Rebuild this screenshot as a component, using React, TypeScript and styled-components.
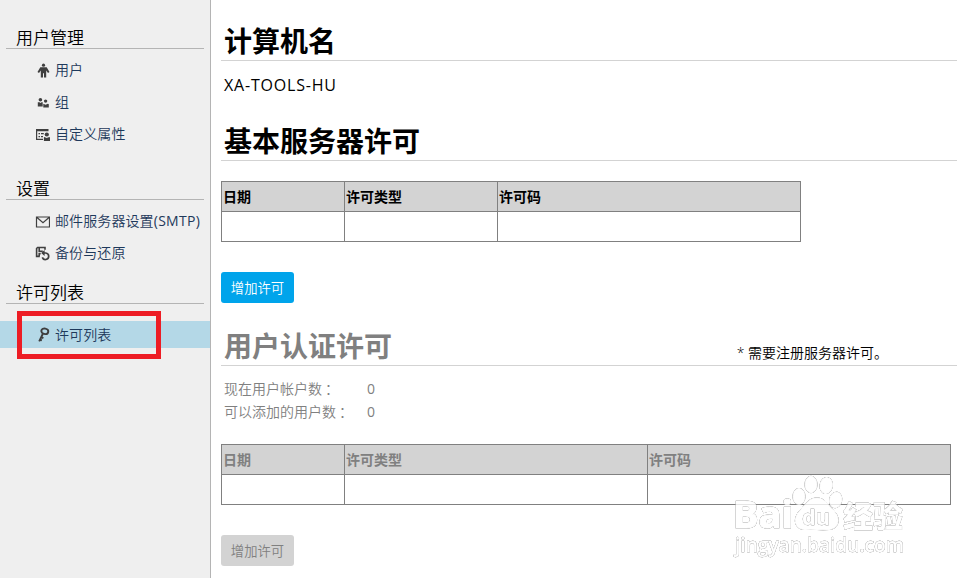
import React from "react";
import styled, { createGlobalStyle } from "styled-components";

const GlobalStyle = createGlobalStyle`
  * { box-sizing: border-box; }
  body {
    margin: 0;
    background: #fff;
    color: #000;
    font-family: "Open Sans", "Noto Sans CJK SC", sans-serif;
    font-size: 14px;
    overflow: hidden;
  }
`;

const Page = styled.div`
  position: relative;
  display: flex;
  width: 957px;
  height: 578px;
  overflow: hidden;
`;

const Sidebar = styled.nav`
  width: 211px;
  flex: none;
  background: #efefef;
  border-right: 1px solid #b4b4b4;
`;

const GroupTitle = styled.h2<{ $height: number }>`
  display: flex;
  align-items: flex-end;
  height: ${(p) => p.$height}px;
  margin: 0 6px;
  padding-left: 10px;
  border-bottom: 1px solid #b4b4b4;
  font-size: 17px;
  font-weight: 350;
  line-height: 20px;
`;

const Menu = styled.ul<{ $offset?: number }>`
  list-style: none;
  margin: ${(p) => p.$offset ?? 5}px 0 0;
  padding: 0;
`;

const MenuItem = styled.li<{ $active?: boolean }>`
  display: flex;
  align-items: center;
  gap: 5px;
  height: ${(p) => (p.$active ? 27 : 32)}px;
  padding-left: 35px;
  background: ${(p) => (p.$active ? "#b4d8e7" : "transparent")};
  color: #1e395b;
  line-height: 20px;
  white-space: nowrap;
`;

const Icon = styled.svg`
  flex: none;
  width: 15px;
  height: 15px;
  color: #3f3f3f;
`;

const MenuText = styled.span`
  font-weight: 350;
  letter-spacing: 0.1px;
`;

const Latin = styled.span`
  font-weight: 400;
  letter-spacing: 0.3px;
`;

const Main = styled.main`
  flex: 1;
  padding-left: 10px;
`;

const Title = styled.h1<{ $height: number; $muted?: boolean }>`
  display: flex;
  align-items: flex-end;
  justify-content: space-between;
  height: ${(p) => p.$height}px;
  margin: 0;
  padding: 0 69px 0 3px;
  border-bottom: 1px solid #d3d3d3;
  color: ${(p) => (p.$muted ? "#808080" : "#000")};
  font-size: 28px;
  font-weight: 700;
  line-height: 38px;
`;

const Note = styled.span`
  color: #000;
  font-size: 14px;
  font-weight: 350;
  line-height: 25px;
`;

const HostName = styled.p`
  margin: 0;
  height: 48px;
  padding: 12px 0 0 3px;
  font-size: 16px;
  line-height: 24px;
  letter-spacing: 0.8px;
`;

const Table = styled.table<{ $top: number; $muted?: boolean }>`
  table-layout: fixed;
  width: fit-content;
  margin-top: ${(p) => p.$top}px;
  border-spacing: 1px;
  background: #808080;
  color: ${(p) => (p.$muted ? "#808080" : "#000")};
`;

const HeadCell = styled.th<{ $width: number }>`
  width: ${(p) => p.$width}px;
  height: 29px;
  padding: 0 0 0 1px;
  background: #d3d3d3;
  font-weight: 700;
  line-height: 20px;
  text-align: left;
`;

const Cell = styled.td`
  height: 29px;
  padding: 0;
  background: #fff;
`;

const Button = styled.button`
  display: block;
  width: 73px;
  height: 31px;
  margin-top: 30px;
  padding: 0;
  border: 0;
  border-radius: 3px;
  background: #00a4eb;
  color: #fff;
  font-family: inherit;
  font-size: 13.333px;
  font-weight: 350;
  &:disabled {
    background: #d3d3d3;
    color: #808080;
  }
`;

const Stats = styled.dl`
  display: grid;
  grid-template-columns: 143px auto;
  grid-auto-rows: 23px;
  margin: 11px 0 0 3px;
  padding-bottom: 1px;
  color: #808080;
  line-height: 23px;
`;

const StatLabel = styled.dt`
  font-weight: 350;
`;

const Colon = styled.span`
  margin-left: 3px;
`;

const StatValue = styled.dd`
  margin: 0;
`;

const Highlight = styled.div`
  position: absolute;
  left: 17px;
  top: 311px;
  width: 144px;
  height: 48px;
  border: 5px solid #ed1c24;
`;

const Watermark = styled.svg`
  position: absolute;
  left: 727px;
  top: 470px;
  width: 190px;
  height: 95px;
  opacity: 0.8;
`;

const Embossed = styled.g`
  stroke: #fff;
  fill: #fff;
  stroke-linejoin: round;
  font-family: "Open Sans", "Noto Sans CJK SC", sans-serif;
  filter: drop-shadow(0 0 0.6px #777) drop-shadow(0 0 0.5px #999);
`;

const UserIcon = () => (
  <Icon viewBox="0 0 15 15" fill="currentColor">
    <circle cx="8.5" cy="2.2" r="1.6" />
    <path d="M5.3 4.2h6.4l2.8 4.7-1.5 1-1.8-2.4v7H9v-4.3H8v4.3H5.8v-7L4 9.900l-1.500-1z" />
  </Icon>
);

const GroupIcon = () => (
  <Icon viewBox="0 0 15 15" fill="currentColor">
    <circle cx="5.4" cy="4.7" r="1.8" />
    <circle cx="10.6" cy="6.1" r="1.7" />
    <path d="M2.8 7.2h1.7l1 .9 1-.9h1.2v4.2H2.800zM8.300 8.700l2.300 1.100 2.300-1.100.900.500v3.200H8.300z" />
  </Icon>
);

const AttributeIcon = () => (
  <Icon viewBox="0 0 15 15" fill="currentColor">
    <path d="M1 2h12.500v2.200H2.200v7.600H8V13H1z" />
    <path d="M3.500 6h1.500v1.200H3.500zM6 6h2.800v1.200H6zM3.500 9h1.500v1.200H3.500zM6 9h2v1.200H6z" />
    <circle cx="11.8" cy="7.5" r="2.100" />
    <path d="M9.200 10l2.500 1 2.600-1 .7.600V14H8.900v-3.400z" />
  </Icon>
);

const MailIcon = () => (
  <Icon viewBox="0 0 15 15" fill="none" stroke="currentColor" strokeWidth="1.2">
    <path d="M1.500 3h13v10h-13zM2 3.500l6 5.300 6-5.300" />
  </Icon>
);

const BackupIcon = () => (
  <Icon viewBox="0 0 15 15" fill="none" stroke="currentColor">
    <path d="M10 3.800V1.500H2.600l-1 1v7.900h3.200M4.200 1.800v3.400h3.600M4.200 10.200V7.600h1.500" strokeWidth="1.600" />
    <path d="M8.200 7h2.600a3.300 3.300 0 1 1-3.500 4.400" strokeWidth="1.700" />
    <path d="M9.600 4L6.200 7l3.400 3z" fill="currentColor" stroke="none" />
  </Icon>
);

const KeyIcon = () => (
  <Icon viewBox="0 0 15 15" fill="none" stroke="currentColor">
    <ellipse cx="9.800" cy="4.300" rx="3.500" ry="2.700" strokeWidth="1.900" transform="rotate(12 9.800 4.300)" />
    <path d="M8 6.500L4.200 14.300M6 10.200l2.400 1M4.700 12.500l2.200.9" strokeWidth="1.900" />
  </Icon>
);

function LicenseTable(props: { top: number; widths: number[]; muted?: boolean }) {
  const labels = ["日期", "许可类型", "许可码"];
  return (
    <Table $top={props.top} $muted={props.muted}>
      <thead>
        <tr>
          {labels.map((label, i) => (
            <HeadCell key={label} $width={props.widths[i]}>{label}</HeadCell>
          ))}
        </tr>
      </thead>
      <tbody>
        <tr>{labels.map((label) => <Cell key={label} />)}</tr>
      </tbody>
    </Table>
  );
}

function BrandWatermark() {
  return (
    <Watermark viewBox="727 470 190 95">
      <Embossed strokeWidth="1">
        <ellipse cx="799" cy="496.5" rx="6" ry="8" />
        <ellipse cx="811" cy="484.5" rx="6" ry="8.2" />
        <ellipse cx="826.3" cy="485.5" rx="6.2" ry="8" transform="rotate(10 826 485)" />
        <ellipse cx="835.7" cy="500" rx="6" ry="7.8" transform="rotate(12 836 500)" />
        <path d="M817 498c8 0 11 7 17 13 7 7 5 18-5 18.500-8 1-16-1-24 0-11 0-12-11-6-18 6-6 9-13.500 18-13.500z" />
      </Embossed>
      <Embossed>
        <text x="733" y="528" fontSize="37" fontWeight="700" strokeWidth="1.2" textLength="60" lengthAdjust="spacingAndGlyphs">Bai</text>
        <text x="802" y="525" fontSize="21" fontWeight="700" strokeWidth="0.3" textLength="28" lengthAdjust="spacingAndGlyphs">du</text>
        <text x="843" y="527" fontSize="30" fontWeight="900" strokeWidth="0.3">经验</text>
        <text x="735" y="552" fontSize="19" fontWeight="600" strokeWidth="0.3" textLength="169" lengthAdjust="spacingAndGlyphs">jingyan.baidu.com</text>
      </Embossed>
    </Watermark>
  );
}

export default function App() {
  return (
    <>
      <GlobalStyle />
      <Page>
        <Sidebar>
          <GroupTitle $height={49}>用户管理</GroupTitle>
          <Menu>
            <MenuItem><UserIcon /><MenuText>用户</MenuText></MenuItem>
            <MenuItem><GroupIcon /><MenuText>组</MenuText></MenuItem>
            <MenuItem><AttributeIcon /><MenuText>自定义属性</MenuText></MenuItem>
          </Menu>
          <GroupTitle $height={50}>设置</GroupTitle>
          <Menu>
            <MenuItem><MailIcon /><MenuText>邮件服务器设置<Latin>(SMTP)</Latin></MenuText></MenuItem>
            <MenuItem><BackupIcon /><MenuText>备份与还原</MenuText></MenuItem>
          </Menu>
          <GroupTitle $height={35}>许可列表</GroupTitle>
          <Menu $offset={17}>
            <MenuItem $active><KeyIcon /><MenuText>许可列表</MenuText></MenuItem>
          </Menu>
        </Sidebar>
        <Main>
          <Title $height={61}>计算机名</Title>
          <HostName>XA-TOOLS-HU</HostName>
          <Title $height={52}>基本服务器许可</Title>
          <LicenseTable top={20} widths={[122, 152, 302]} />
          <Button>增加许可</Button>
          <Title $height={63} $muted>
            用户认证许可<Note>* 需要注册服务器许可。</Note>
          </Title>
          <Stats>
            <StatLabel>现在用户帐户数<Colon>：</Colon></StatLabel><StatValue>0</StatValue>
            <StatLabel>可以添加的用户数<Colon>：</Colon></StatLabel><StatValue>0</StatValue>
          </Stats>
          <LicenseTable top={20} widths={[122, 302, 302]} muted />
          <Button disabled>增加许可</Button>
        </Main>
        <Highlight />
        <BrandWatermark />
      </Page>
    </>
  );
}
